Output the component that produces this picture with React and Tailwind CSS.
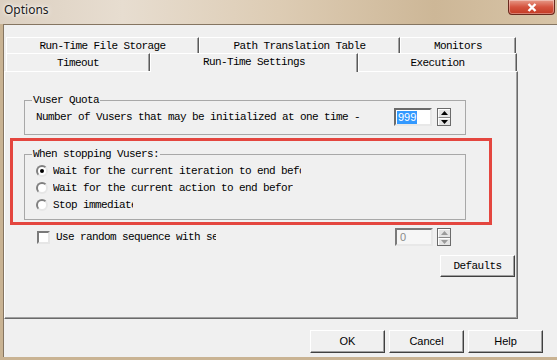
import React from "react";

const mono =
  "font-['Liberation_Mono','DejaVu_Sans_Mono',monospace] text-[11px] tracking-[-0.6px] text-black leading-[12px]";

// classic raised tab
const Tab = ({ label, w, h, selected }) => (
  <div
    className={
      "flex items-center justify-center bg-[#f0f0f0] border-t border-l border-white border-r border-r-[#5a5a5a] shadow-[inset_-1px_0_0_#a0a0a0] " +
      mono +
      (selected ? " relative z-10 -mb-px pb-[2px]" : "")
    }
    style={{ width: w, height: selected ? h + 1 : h }}
  >
    {label}
  </div>
);

const Arrow = ({ up, color = "#000" }) => (
  <svg width="7" height="4" viewBox="0 0 7 4">
    {up ? (
      <polygon points="3.5,0 7,4 0,4" fill={color} />
    ) : (
      <polygon points="0,0 7,0 3.5,4" fill={color} />
    )}
  </svg>
);

const Spin = ({ disabled }) => (
  <div className="flex flex-col w-[14px] h-[18px] border border-[#6b6b6b]">
    <div className="flex-1 flex items-center justify-center bg-[#e4e4e4] border-t border-l border-white border-b border-b-[#8a8a8a]">
      <Arrow up color={disabled ? "#9a9a9a" : "#000"} />
    </div>
    <div className="flex-1 flex items-center justify-center bg-[#e4e4e4] border-t border-l border-white">
      <Arrow color={disabled ? "#9a9a9a" : "#000"} />
    </div>
  </div>
);

const Radio = ({ checked }) => (
  <div className="w-[12px] h-[12px] rounded-full border-2 border-t-[#808080] border-l-[#808080] border-r-[#e6e6e6] border-b-[#e6e6e6] bg-white flex items-center justify-center">
    {checked && <div className="w-[4px] h-[4px] rounded-full bg-black" />}
  </div>
);

const Btn = ({ children, className = "" }) => (
  <div
    className={
      "flex items-center justify-center w-[75px] bg-[#f0f0f0] border-t border-l border-white border-r border-b border-r-[#404040] border-b-[#404040] shadow-[inset_-1px_-1px_0_#a0a0a0] " +
      className
    }
  >
    {children}
  </div>
);

const Group = ({ title, className, children }) => (
  <fieldset className={"border border-[#a8a8a8] w-[442px] " + className}>
    <legend className={"ml-[7px] px-[1px] " + mono}>{title}</legend>
    {children}
  </fieldset>
);

export default function App() {
  const radios = [
    { t: "Wait for the current iteration to end before stopping", w: 248, c: true },
    { t: "Wait for the current action to end before stopping", w: 240 },
    { t: "Stop immediately", w: 80 },
  ];

  return (
    <div className="w-[557px] h-[360px] overflow-hidden flex flex-col bg-[#d6c6ae]">
      {/* title bar */}
      <div className="h-[24px] flex justify-between items-start bg-[linear-gradient(90deg,#dcd0c1_0%,#e7ddd0_22%,#ddccb4_50%,#cdb797_78%,#d7c4a7_100%)]">
        <div className="pl-[4px] pt-[2px] text-[12px] leading-[16px] text-[#1a1a1a] font-['Noto_Sans',sans-serif] [text-shadow:0_0_6px_#fff,0_0_3px_#fff]">
          Options
        </div>
        <div className="mr-[2px] w-[47px] h-[15px] rounded-b-[4px] border border-t-0 border-[#6a2a1e] bg-[linear-gradient(180deg,#e79a88_0%,#d5543f_50%,#c23a24_100%)] flex items-center justify-center shadow-[inset_0_0_0_1px_rgba(255,255,255,0.35)]">
          <svg width="10" height="9" viewBox="0 0 10 9">
            <path d="M1.5 1 L8.5 8 M8.5 1 L1.5 8" stroke="#fff" strokeWidth="2.4" />
          </svg>
        </div>
      </div>

      <div className="flex-1 flex min-h-0">
        <div className="w-[3px] bg-[#c9b393]" />
        <div className="flex-1 flex flex-col bg-[#f0f0f0] border-t border-l border-[#857561]">
          {/* tab rows */}
          <div className="pt-[12px] pl-[2px] flex flex-col">
            <div className="flex">
              <Tab label="Run-Time File Storage" w={193} h={16} />
              <Tab label="Path Translation Table" w={201} h={16} />
              <Tab label="Monitors" w={116} h={16} />
            </div>
            <div className="flex">
              <Tab label="Timeout" w={144} h={18} />
              <Tab label="Run-Time Settings" w={208} h={18} selected />
              <Tab label="Execution" w={159} h={18} />
            </div>
          </div>

          {/* panel */}
          <div className="w-[514px] h-[248px] flex flex-col border-t border-l border-white border-r border-b border-r-[#6a6a6a] border-b-[#6a6a6a] shadow-[inset_-1px_-1px_0_#a0a0a0]">
            <Group title="Vuser Quota" className="mt-[22px] ml-[19px] h-[41px]">
              <div className="mt-[2px] h-[18px] flex items-center justify-between pl-[11px] pr-[14px]">
                <span className={mono + " whitespace-nowrap"}>
                  Number of Vusers that may be initialized at one time -
                </span>
                <div className="flex items-center gap-[5px]">
                  <div className="w-[38px] h-[18px] bg-white border-2 border-t-[#6b6b6b] border-l-[#6b6b6b] border-r-[#e8e8e8] border-b-[#e8e8e8] flex items-center pl-[1px]">
                    <span className="bg-[#3399ff] text-white text-[11px] leading-[13px] px-[1px] font-['Liberation_Sans',sans-serif]">
                      999
                    </span>
                  </div>
                  <Spin />
                </div>
              </div>
            </Group>

            <div className="mt-[3px] ml-[5px] w-[482px] h-[87px] border-[3px] border-[#e4463f]">
              <Group title="When stopping Vusers:" className="mt-[7px] ml-[11px] h-[72px]">
                <div className="pt-[2px] flex flex-col">
                  {radios.map((r) => (
                    <div key={r.t} className="h-[17px] flex items-center pl-[11px] gap-[5px]">
                      <Radio checked={r.c} />
                      <span
                        className={mono + " whitespace-nowrap overflow-hidden"}
                        style={{ width: r.w }}
                      >
                        {r.t}
                      </span>
                    </div>
                  ))}
                </div>
              </Group>
            </div>

            <div className="mt-[3px] w-[446px] h-[18px] flex items-center justify-between">
              <div className="flex items-center pl-[32px] gap-[6px]">
                <div className="w-[13px] h-[13px] bg-white border-2 border-t-[#7a7a7a] border-l-[#7a7a7a] border-r-[#e6e6e6] border-b-[#e6e6e6]" />
                <span className={mono + " whitespace-nowrap overflow-hidden w-[160px]"}>
                  Use random sequence with seed
                </span>
              </div>
              <div className="flex items-center gap-[4px]">
                <div className="w-[38px] h-[18px] bg-[#f6f6f6] border-2 border-t-[#7a7a7a] border-l-[#7a7a7a] border-r-[#e8e8e8] border-b-[#e8e8e8] flex items-center pl-[3px] text-[11px] text-[#8a8a8a] font-['Liberation_Sans',sans-serif]">
                  0
                </div>
                <Spin disabled />
              </div>
            </div>

            <Btn className={"mt-[9px] self-end mr-[2px] h-[22px] " + mono}>Defaults</Btn>
          </div>

          {/* dialog buttons */}
          <div className="mt-[11px] flex justify-end gap-[4px] pr-[14px] text-[11px] text-black font-['Liberation_Sans',sans-serif]">
            <Btn className="h-[23px]">OK</Btn>
            <Btn className="h-[23px]">Cancel</Btn>
            <Btn className="h-[23px]">Help</Btn>
          </div>
        </div>
      </div>
      <div className="h-[3px] bg-[#c9b393]" />
    </div>
  );
}
